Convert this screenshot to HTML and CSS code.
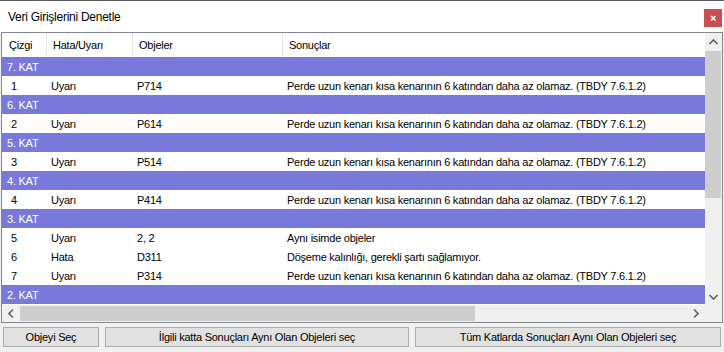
FILE: index.html
```html
<!DOCTYPE html>
<html lang="tr">
<head>
<meta charset="utf-8">
<title>Veri Girişlerini Denetle</title>
<link rel="stylesheet" href="styles.css">
</head>
<body>
<div class="window">
  <div class="titlebar">
    <span class="title">Veri Girişlerini Denetle</span>
    <div class="close" title="Kapat">
      <svg width="18" height="18" viewBox="0 0 18 18"><path d="M7 7 L11.5 11.5 M11.5 7 L7 11.5" fill="none" stroke="#fff" stroke-width="1.6"/></svg>
    </div>
  </div>
  <div class="grid">
    <div class="grid-top">
      <div class="viewport">
        <div class="header">
          <div class="hcell">Çizgi</div>
          <div class="hcell">Hata/Uyarı</div>
          <div class="hcell">Objeler</div>
          <div class="hcell">Sonuçlar</div>
        </div>
        <div class="group">7. KAT</div>
        <div class="data"><span>1</span><span>Uyarı</span><span>P714</span><span>Perde uzun kenarı kısa kenarının 6 katından daha az olamaz. (TBDY 7.6.1.2)</span></div>
        <div class="group">6. KAT</div>
        <div class="data"><span>2</span><span>Uyarı</span><span>P614</span><span>Perde uzun kenarı kısa kenarının 6 katından daha az olamaz. (TBDY 7.6.1.2)</span></div>
        <div class="group">5. KAT</div>
        <div class="data"><span>3</span><span>Uyarı</span><span>P514</span><span>Perde uzun kenarı kısa kenarının 6 katından daha az olamaz. (TBDY 7.6.1.2)</span></div>
        <div class="group">4. KAT</div>
        <div class="data"><span>4</span><span>Uyarı</span><span>P414</span><span>Perde uzun kenarı kısa kenarının 6 katından daha az olamaz. (TBDY 7.6.1.2)</span></div>
        <div class="group">3. KAT</div>
        <div class="data"><span>5</span><span>Uyarı</span><span>2, 2</span><span>Aynı isimde objeler</span></div>
        <div class="data"><span>6</span><span>Hata</span><span>D311</span><span>Döşeme kalınlığı, gerekli şartı sağlamıyor.</span></div>
        <div class="data"><span>7</span><span>Uyarı</span><span>P314</span><span>Perde uzun kenarı kısa kenarının 6 katından daha az olamaz. (TBDY 7.6.1.2)</span></div>
        <div class="group">2. KAT</div>
      </div>
      <div class="vscroll">
        <div class="sbtn"><svg width="17" height="17" viewBox="0 0 17 17"><path d="M4.5 11 L8.5 7 L12.5 11" fill="none" stroke="#606060" stroke-width="1.6"/></svg></div>
        <div class="vthumb"></div>
        <div class="vtrack"></div>
        <div class="sbtn"><svg width="17" height="17" viewBox="0 0 17 17"><path d="M4.5 7 L8.5 11 L12.5 7" fill="none" stroke="#606060" stroke-width="1.6"/></svg></div>
      </div>
    </div>
    <div class="grid-bottom">
      <div class="hscroll">
        <div class="sbtn"><svg width="17" height="17" viewBox="0 0 17 17"><path d="M11 4.5 L7 8.5 L11 12.5" fill="none" stroke="#606060" stroke-width="1.6"/></svg></div>
        <div class="hthumb"></div>
        <div class="htrack"></div>
        <div class="sbtn"><svg width="17" height="17" viewBox="0 0 17 17"><path d="M6 4.5 L10 8.5 L6 12.5" fill="none" stroke="#606060" stroke-width="1.6"/></svg></div>
      </div>
      <div class="corner"></div>
    </div>
  </div>
  <div class="buttons">
    <button class="btn btn-small">Objeyi Seç</button>
    <button class="btn btn-mid">İlgili katta Sonuçları Aynı Olan Objeleri seç</button>
    <button class="btn btn-wide">Tüm Katlarda Sonuçları Aynı Olan Objeleri seç</button>
  </div>
</div>
</body>
</html>
```
FILE: styles.css
```css
* { box-sizing: border-box; }
html, body { margin: 0; padding: 0; }
body {
  width: 724px;
  height: 352px;
  overflow: hidden;
  background: #f0f0f0;
  font-family: "Liberation Sans", Arial, sans-serif;
  font-size: 11px;
  letter-spacing: -0.24px;
  color: #000;
}
.window {
  display: flex;
  flex-direction: column;
  height: 352px;
  border-top: 1px solid #5a5a5a;
}
.titlebar {
  height: 31px;
  background: #fff;
  display: flex;
  align-items: center;
  justify-content: space-between;
  padding: 0 2px 0 8px;
}
.title {
  font-size: 12px;
  letter-spacing: -0.26px;
}
.close {
  width: 18px;
  height: 18px;
  margin-top: 2px;
  background: #c75050;
  display: flex;
}
.grid {
  margin: 0 1px;
  height: 291px;
  border: 1px solid #828790;
  background: #fff;
  display: flex;
  flex-direction: column;
}
.grid-top {
  display: flex;
  height: 272px;
}
.viewport {
  flex: 1;
  overflow: hidden;
  background: #fff;
}
.header {
  display: grid;
  grid-template-columns: 44px 86px 150px 1fr;
  height: 24px;
}
.hcell {
  display: flex;
  align-items: center;
  padding-left: 6px;
  border-left: 1px solid #e5e5e5;
}
.hcell:first-child {
  border-left: none;
  padding-left: 7px;
}
.group {
  height: 19px;
  background: #7979db;
  color: #fff;
  display: flex;
  align-items: center;
  padding-left: 5px;
}
.data {
  display: grid;
  grid-template-columns: 44px 86px 150px 1fr;
  height: 19px;
  align-items: center;
}
.data span {
  padding-left: 5px;
  white-space: nowrap;
}
.data span:first-child {
  padding-left: 9px;
}
.vscroll {
  width: 17px;
  background: #f0f0f0;
  display: flex;
  flex-direction: column;
}
.sbtn {
  width: 17px;
  height: 17px;
  flex: none;
  display: flex;
}
.vthumb {
  height: 147px;
  margin: 1px 1px 0 0;
  background: #cdcdcd;
  flex: none;
}
.vtrack { flex: 1; }
.grid-bottom {
  display: flex;
  height: 17px;
}
.hscroll {
  flex: 1;
  display: flex;
  background: #f0f0f0;
}
.hthumb {
  width: 455px;
  margin: 1px 0 1px 1px;
  background: #cdcdcd;
  flex: none;
}
.htrack { flex: 1; }
.corner {
  width: 17px;
  background: #f0f0f0;
}
.buttons {
  display: flex;
  gap: 6px;
  padding: 4px 3px 0 3px;
}
.btn {
  height: 20px;
  background: #e1e1e1;
  border: 1px solid #adadad;
  font-family: "Liberation Sans", Arial, sans-serif;
  font-size: 11px;
  letter-spacing: -0.24px;
  color: #000;
  padding: 0;
}
.btn-small { width: 96px; }
.btn-mid { width: 304px; }
.btn-wide { width: 306px; }
```
